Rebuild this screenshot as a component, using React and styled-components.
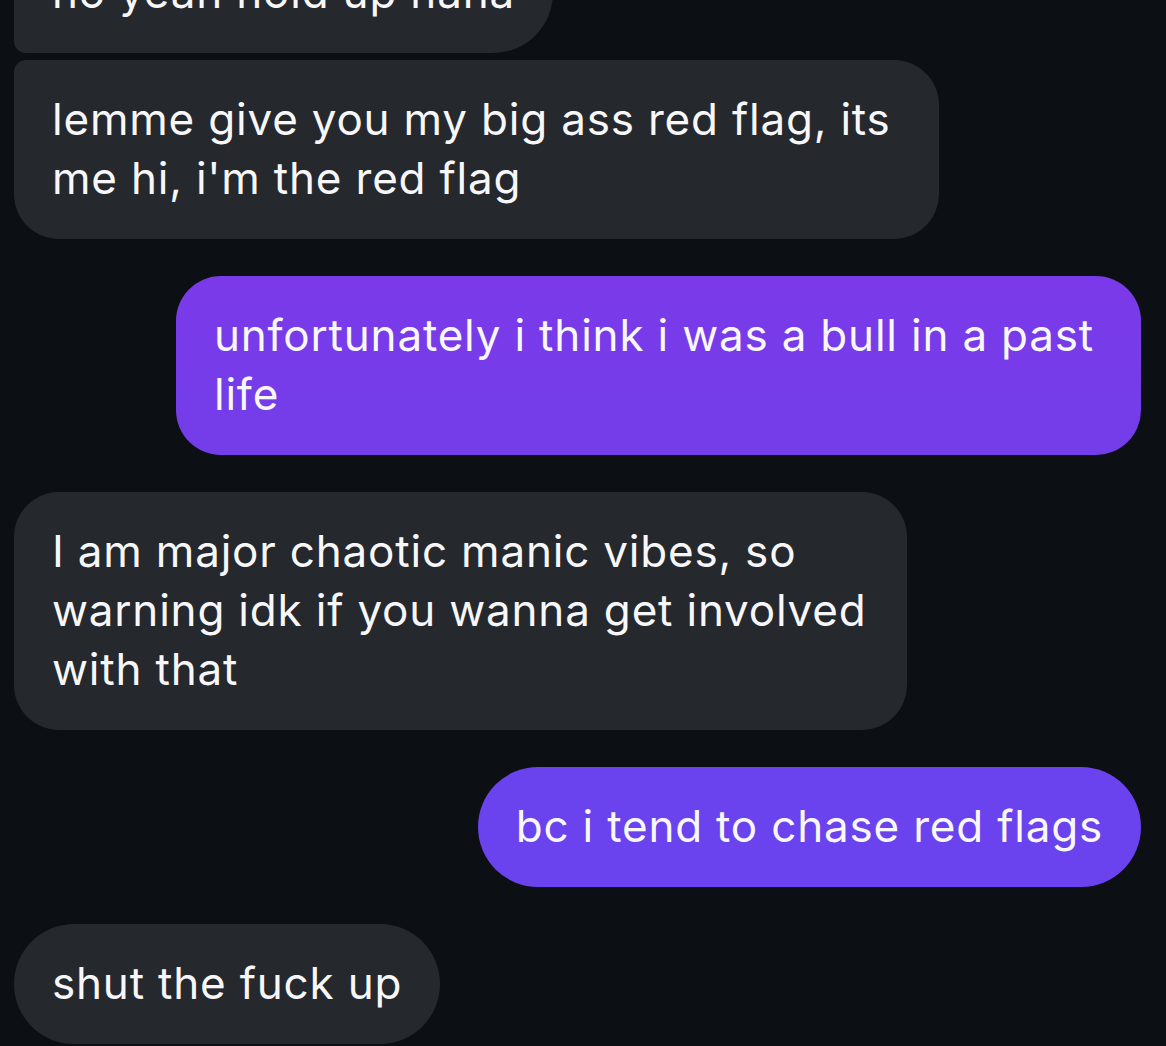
import React from 'react';
import styled, { createGlobalStyle } from 'styled-components';

const GlobalStyle = createGlobalStyle`
    html, body {
        margin: 0;
        background: #0c0f13;
    }
    body {
        font-family: Inter, "Noto Sans", "Liberation Sans", sans-serif;
        -webkit-font-smoothing: antialiased;
    }
`;

// 대화 목록 전체
const Thread = styled.div`
    display: flex;
    flex-direction: column;
    height: 1046px;
    overflow: hidden;
    padding: 0 25px 0 14px;
    box-sizing: border-box;
`;

// 첫 말풍선이 화면 위로 잘려 있음
const Inner = styled.div`
    display: flex;
    flex-direction: column;
    margin-top: -67px;
`;

// 말풍선
const Bubble = styled.div`
    align-self: ${(p) => (p.$mine ? 'flex-end' : 'flex-start')};
    margin-top: ${(p) => (p.$grouped ? '7px' : '37px')};
    padding: 30px ${(p) => p.$padRight || 38}px 31px 38px;
    border-radius: ${(p) => (p.$lines > 1 ? '45px' : '60px')};
    ${(p) => p.$tailTop && 'border-top-left-radius: 12px;'}
    ${(p) => p.$tailBottom && 'border-bottom-left-radius: 12px;'}
    background: ${(p) => p.$bg};
    color: #f7f7f9;
    font-size: 44px;
    line-height: 59px;
    letter-spacing: 0.8px;
    white-space: nowrap;

    &:first-child {
        margin-top: 0;
    }
`;

const messages = [
    { lines: ['no yeah hold up haha'], tailBottom: true },
    { lines: ['lemme give you my big ass red flag, its', 'me hi, i\'m the red flag'], grouped: true, tailTop: true, padRight: 48 },
    { lines: ['unfortunately i think i was a bull in a past', 'life'], mine: true, bg: 'linear-gradient(180deg, #7b3ae9 0%, #733de9 100%)', padRight: 47 },
    { lines: ['I am major chaotic manic vibes, so', 'warning idk if you wanna get involved', 'with that'], padRight: 41 },
    { lines: ['bc i tend to chase red flags'], mine: true, bg: '#6a42ee' },
    { lines: ['shut the fuck up'] },
];

const App = () => {
    return (
        <Thread>
            <GlobalStyle />
            <Inner>
                {messages.map((m, i) => (
                    <Bubble
                        key={i}
                        $mine={m.mine}
                        $grouped={m.grouped}
                        $tailTop={m.tailTop}
                        $tailBottom={m.tailBottom}
                        $lines={m.lines.length}
                        $padRight={m.padRight}
                        $bg={m.bg || '#25282d'}
                    >
                        {m.lines.map((l, j) => (
                            <React.Fragment key={j}>
                                {j > 0 && <br />}
                                {l}
                            </React.Fragment>
                        ))}
                    </Bubble>
                ))}
            </Inner>
        </Thread>
    );
};

export default App;
